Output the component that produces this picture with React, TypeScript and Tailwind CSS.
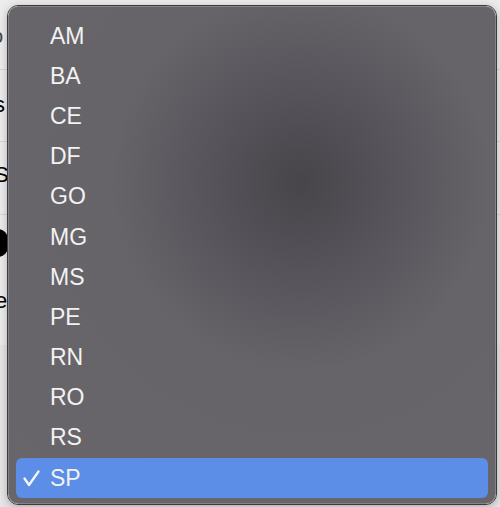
import React from 'react';

const states = ['AM', 'BA', 'CE', 'DF', 'GO', 'MG', 'MS', 'PE', 'RN', 'RO', 'RS', 'SP'];

// checkmark drawn in row coordinates (row is 40px tall)
const Check = () => (
  <svg width="30" height="40" viewBox="0 0 30 40" className="absolute left-0 top-0">
    <path d="M8.5 20.5 L13 27 L22.5 13.5" fill="none" stroke="#f6f6f6" strokeWidth="2.3" strokeLinecap="round" strokeLinejoin="round" />
  </svg>
);

export default function App() {
  const selected = 'SP';
  return (
    <div className="relative w-[500px] h-[507px] overflow-hidden bg-[#ececec]" style={{ fontFamily: '"Liberation Sans", Arial, sans-serif' }}>
      {/* page behind the menu */}
      <div className="flex flex-col">
        <div className="h-[70px] border-b border-[#d6d6d6] text-[20px] leading-none text-[#444] pt-[26px] -ml-[8px]">o</div>
        <div className="h-[72px] border-b border-[#d6d6d6] text-[22px] leading-none text-black pt-[24px] -ml-[6px]">s</div>
        <div className="h-[73px] border-b border-[#d6d6d6] text-[22px] leading-none text-black pt-[22px] -ml-[6px]">S</div>
        <div className="h-[65px] relative">
          <div className="absolute -left-[12px] top-[14px] w-[20px] h-[28px] rounded-full bg-black" />
        </div>
        <div className="h-[65px] text-[22px] leading-none text-black pt-[10px] -ml-[5px]">e</div>
        <div className="h-[170px] bg-[#e6e6e6]" />
      </div>

      {/* popup menu */}
      <div className="absolute left-[7px] top-[5px] w-[490px] h-[500px] rounded-[11px] border border-[#3c3b3e] shadow-[0_2px_8px_rgba(0,0,0,0.25)] overflow-hidden">
        <div className="w-full h-full rounded-[10px] border border-[#858388] bg-[radial-gradient(circle_at_292px_175px,#47454a_0px,#56545a_90px,#666469_190px,#68666b_100%)] pt-[9px] px-[7px]">
          {states.map((s) => (
            <div
              key={s}
              className={`relative h-[40.2px] flex items-center pl-[34px] rounded-[6px] text-[23px] text-[#f2f2f2] ${s === selected ? 'bg-[#5c8de7]' : ''}`}
            >
              {s === selected && <Check />}
              <span className="leading-none">{s}</span>
            </div>
          ))}
        </div>
      </div>
    </div>
  );
}
